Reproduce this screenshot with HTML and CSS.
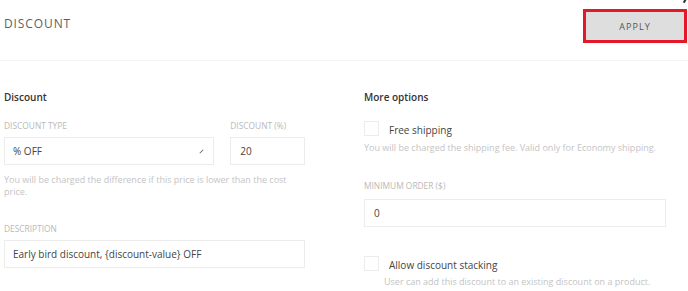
FILE: index.html
```html
<!DOCTYPE html>
<html lang="en">
<head>
    <meta charset="UTF-8">
    <title>Discount</title>
    <link rel="stylesheet" href="styles.css">
</head>
<body>
    <!-- Header -->
    <div class="header">
        <h1>DISCOUNT</h1>
        <button class="apply-btn">APPLY</button>
        <span class="corner-mark"></span>
    </div>

    <div class="content">
        <!-- Discount column -->
        <section class="col">
            <h2>Discount</h2>
            <div class="field-row">
                <div class="field type-field">
                    <label>DISCOUNT TYPE</label>
                    <div class="box select-box">
                        <span>% OFF</span>
                        <span class="select-arrow"></span>
                    </div>
                </div>
                <div class="field value-field">
                    <label>DISCOUNT (%)</label>
                    <div class="box">20</div>
                </div>
            </div>
            <p class="help help-wrap">You will be charged the difference if this price is lower than the cost price.</p>

            <div class="field desc-field">
                <label>DESCRIPTION</label>
                <div class="box">Early bird discount, {discount-value} OFF</div>
            </div>
        </section>

        <!-- More options column -->
        <section class="col right-col">
            <h2>More options</h2>
            <div class="check-row first-check">
                <span class="checkbox"></span>
                <span>Free shipping</span>
            </div>
            <p class="help help-tight">You will be charged the shipping fee. Valid only for Economy shipping.</p>

            <div class="field min-field">
                <label>MINIMUM ORDER ($)</label>
                <div class="box">0</div>
            </div>

            <div class="check-row second-check">
                <span class="checkbox"></span>
                <span>Allow discount stacking</span>
            </div>
            <p class="help help-tight2">User can add this discount to an existing discount on a product.</p>
        </section>
    </div>
</body>
</html>
```

FILE: styles.css
```css
* {
    margin: 0;
    padding: 0;
    box-sizing: border-box;
}

body {
    font-family: 'Open Sans', 'Liberation Sans', sans-serif;
    background-color: #fff;
    color: #444;
    width: 688px;
    height: 291px;
    overflow: hidden;
}

/* Header */
.header {
    height: 61px;
    padding: 9px 1px 0 4px;
    border-bottom: 1px solid #f4f4f4;
    display: flex;
    justify-content: space-between;
    align-items: flex-start;
    position: relative;
}

.header h1 {
    font-size: 12px;
    font-weight: 400;
    letter-spacing: 0.9px;
    color: #5f5f5f;
    line-height: 16px;
    margin-top: 7px;
}

.apply-btn {
    width: 104px;
    height: 34px;
    border: 3px solid #e3192b;
    background-color: #dedede;
    color: #555;
    font-family: inherit;
    font-size: 9px;
    letter-spacing: 1.1px;
}

.corner-mark {
    position: absolute;
    top: -2px;
    right: 2px;
    width: 2px;
    height: 5px;
    background-color: #333;
    transform: rotate(30deg);
}

/* Content */
.content {
    display: flex;
    gap: 59px;
    padding: 28px 0 0 4px;
}

.col {
    width: 301px;
}

.right-col {
    width: 302px;
}

h2 {
    font-size: 10px;
    font-weight: 600;
    color: #333;
    line-height: 16px;
}

label {
    display: block;
    font-size: 8.4px;
    color: #b9b9b9;
    line-height: 12px;
    margin-bottom: 5px;
}

.field-row {
    display: flex;
    gap: 16px;
    margin-top: 15px;
}

.type-field {
    width: 211px;
}

.value-field {
    width: 75px;
}

.box {
    height: 28px;
    border: 1px solid #ececec;
    padding: 0 8px;
    font-size: 10px;
    line-height: 26px;
    color: #444;
}

.select-box {
    display: flex;
    justify-content: space-between;
    align-items: center;
    padding-right: 11px;
}

.select-arrow {
    width: 1px;
    height: 5px;
    background-color: #666;
    transform: rotate(45deg);
}

.value-field .box,
.min-field .box {
    padding-left: 9px;
}

.help {
    font-size: 9px;
    color: #c4c4c4;
    line-height: 12px;
}

.help-wrap {
    margin-top: 9px;
    width: 290px;
}

.desc-field {
    margin-top: 25px;
}

.check-row {
    display: flex;
    align-items: flex-start;
    gap: 10px;
    font-size: 10px;
    line-height: 16px;
    color: #444;
}

.checkbox {
    width: 15px;
    height: 15px;
    border: 1px solid #ececec;
    margin-top: -1px;
}

.first-check {
    margin-top: 17px;
}

.help-tight {
    margin-top: 4px;
}

.min-field {
    margin-top: 26px;
}

.min-field label {
    margin-bottom: 7px;
}

.second-check {
    margin-top: 30px;
}

.help-tight2 {
    margin-top: 3px;
    padding-left: 20px;
}
```
